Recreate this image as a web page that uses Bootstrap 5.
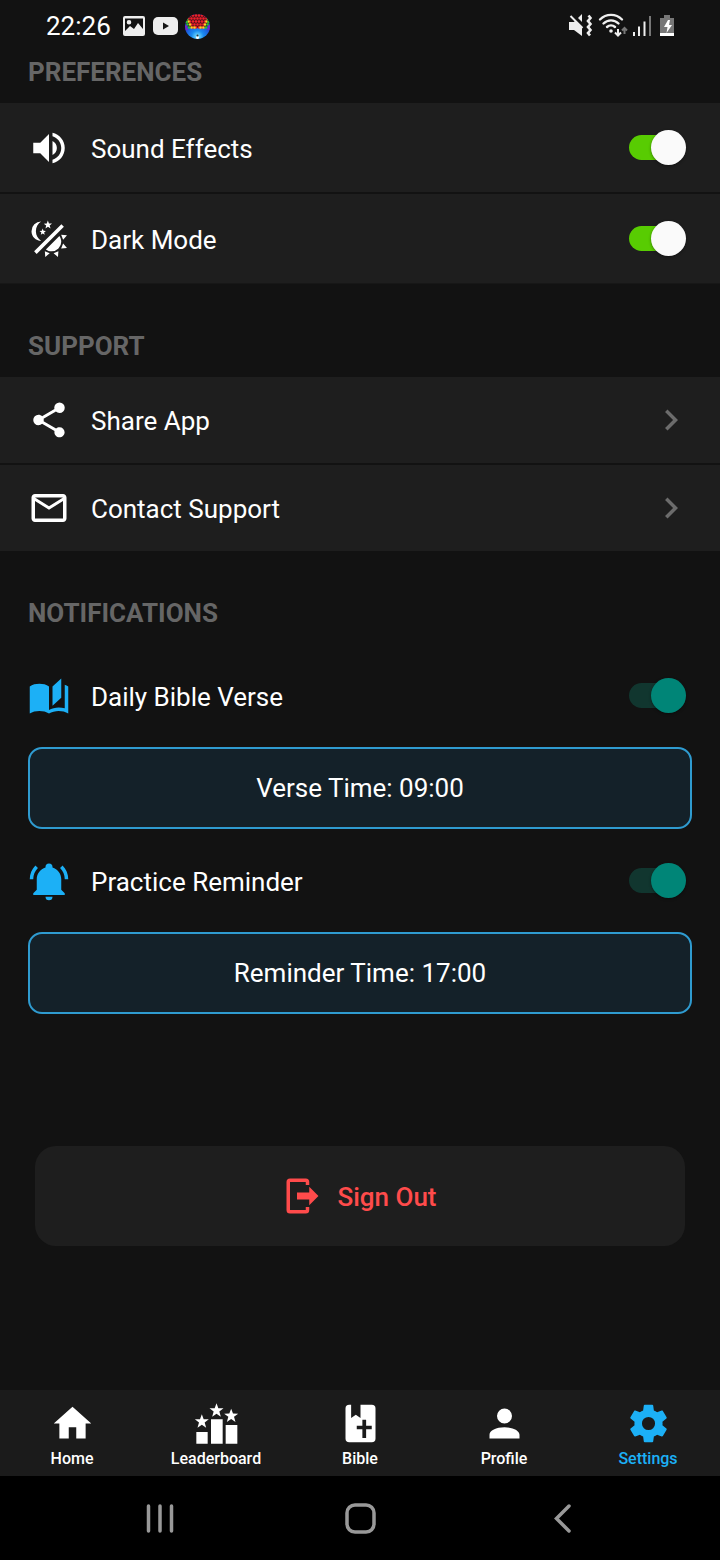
<!DOCTYPE html>
<html lang="en">
<head>
<meta charset="utf-8">
<meta name="viewport" content="width=device-width, initial-scale=1">
<title>Settings</title>
<link href="https://cdn.jsdelivr.net/npm/bootstrap@5.3.0/dist/css/bootstrap.min.css" rel="stylesheet">
<style>
body{background:#121212;color:#fff;font-family:Roboto,"Noto Sans",sans-serif;font-size:26px;line-height:40px}
svg{display:block;flex:none;fill:currentColor}
.status{height:52px;padding:0 45px 0 46px}
.status-left{gap:7px}
.section-title{font-size:26px;line-height:40px;font-weight:700;color:#666;margin:0 28px 11px}
.panel{margin-bottom:42px;border-radius:0}
.panel .list-group-item{padding:0 28px;border:0;height:86px;color:#fff;background:#1e1e1e}
.panel .list-group-item+.list-group-item{border-top:2px solid #121212;height:88px}
.toggles{border-bottom:1px solid #171717}
.panel.toggles .list-group-item{height:89px}
.panel.toggles .list-group-item+.list-group-item{height:91px}
.setting{gap:21px}
.setting label,.setting .grow{flex:1;padding-top:2px}
.ico{width:42px;height:42px}
.accent{color:#1cb0f6}
.chevron{color:#6c6c6c}
.switch{appearance:none;position:relative;width:57px;height:35px;margin:0 6px 0 0;flex:none;background:none;--track:#58cc02;--thumb:#fafafa}
.switch.teal{--track:#11362f;--thumb:#008577}
.switch::before{content:"";position:absolute;left:0;right:5px;top:5px;bottom:5px;border-radius:13px;background:var(--track)}
.switch::after{content:"";position:absolute;right:0;top:0;width:35px;height:35px;border-radius:50%;background:var(--thumb);box-shadow:0 1px 3px rgba(0,0,0,.4)}
.notify{height:83px;padding:0 28px;margin-top:10px}
.time-btn{margin:10px 28px 0;height:82px;border:2px solid #2f9bd0;border-radius:14px;background:#142129;color:#fff;font-size:26px;line-height:40px}
.time-btn:hover{background:#182a34;border-color:#1cb0f6;color:#fff}
.signout{margin:132px 35px 60px;height:100px;border:0;border-radius:21px;background:#1e1e1e;color:#ff4b4b;font-size:26px;line-height:40px;font-weight:500;gap:12px}
.signout:hover{background:#262626;color:#ff4b4b}
.signout span{padding-top:2px}
.tabs{height:86px;background:#1b1b1b}
.tabs .nav-link{color:#fff;padding:11px 0 0;font-size:16px;line-height:26px;font-weight:500}
.tabs .nav-link.active{color:#1cb0f6}
.tabs svg{width:45px;height:45px}
.sysnav{height:84px;background:#000;padding:0 60px}
.sysnav button{background:none;border:0;color:#999;padding:0}
.sysnav svg{fill:none;stroke:currentColor}
</style>
<script src="https://cdn.jsdelivr.net/npm/bootstrap@5.3.0/dist/js/bootstrap.bundle.min.js"></script>
</head>
<body class="d-flex flex-column min-vh-100">
<header class="status d-flex align-items-center justify-content-between">
  <div class="status-left d-flex align-items-center">
    <time class="me-1">22:26</time>
    <svg width="24" height="26" viewBox="1 0 24 26"><path fill="#eee" fill-rule="evenodd" d="M4 3h18a2 2 0 0 1 2 2v16a2 2 0 0 1-2 2H4a2 2 0 0 1-2-2V5a2 2 0 0 1 2-2zM4 5.500V18l5-5 4 3 4-6 5 6V5.500zM8 7a2.300 2.300 0 1 1 0 4.600A2.300 2.300 0 0 1 8 7z"/></svg>
    <svg width="25" height="26" viewBox="0 0 25 26"><rect x="0" y="4" width="25" height="18" rx="5" fill="#eee"/><path fill="#161616" d="M10 9.500v7l6-3.500z"/></svg>
    <svg width="25" height="25" viewBox="0 0 25 25">
      <defs>
        <radialGradient id="sky" cx=".5" cy=".9" r=".6"><stop offset="0" stop-color="#7fe8ff"/><stop offset=".4" stop-color="#1a8cf0"/><stop offset="1" stop-color="#1c3fd0"/></radialGradient>
        <clipPath id="ball"><circle cx="12.500" cy="12.500" r="12.500"/></clipPath>
      </defs>
      <g clip-path="url(#ball)">
        <path fill="url(#sky)" d="M0 0h25v25H0z"/>
        <path fill="#501018" d="M0 0h25v9l-4 5H4L0 9z"/>
        <g fill="none" stroke-width="2.600" stroke-linecap="round">
          <g stroke="#f0202c" stroke-dasharray="0 3"><path d="M5 1.500h16M3.500 4.500h18.500M5 7.500h16M6.500 10.500h12.500M8 13.500h9.500"/></g>
          <g stroke="#ffd21e" stroke-dasharray="0 3"><path d="M3.500 7.500h.1M21.500 7.500h.1M5 10.500h.1M20 10.500h.1M6.500 13.500h3.200M15.500 13.500h3.200"/></g>
          <g stroke="#25c33a"><path d="M2 5h.1M23 5h.1M1.500 8h.1M23.500 8h.1M2.500 10.500h.1M22.500 10.500h.1M4 13.500h.1M21 13.500h.1"/></g>
          <g stroke="#7a22c8"><path d="M.8 12.500h.1M24 12.500h.1M1.500 15h.1M23.500 15h.1"/></g>
        </g>
        <circle cx="12.500" cy="23.500" r="1.500" fill="#fff"/><circle cx="12.500" cy="21.500" r="1" fill="#333"/>
      </g>
    </svg>
  </div>
  <svg width="106" height="26" viewBox="0 0 106 26">
    <g fill="#eee"><path d="M0 9h5l1-1 7 7v8l-8-6H0zM9 5l4-4v8z"/><path d="M1.500 3l12 12" stroke="#eee" stroke-width="2"/></g>
    <path d="M19.500 2.500l2 2.500-2.500 3 2.500 3-2.500 3 2.500 3-2.500 3 2 2.500" fill="none" stroke="#eee" stroke-width="2.600"/>
    <g fill="none" stroke="#eee" stroke-width="2.400" stroke-linecap="round"><path d="M31 6.500a15.500 15.500 0 0 1 22 0M34.500 10.500a10.500 10.500 0 0 1 15 0M38 14a6 6 0 0 1 8 0"/></g><circle cx="42" cy="18" r="1.800" fill="#eee"/>
    <path d="M49 16v6M46 19.500l3 3 3-3" fill="none" stroke="#eee" stroke-width="2"/><path d="M55.500 21v-6M53 17.500l2.500-2.500 2.500 2.500" fill="none" stroke="#777" stroke-width="2"/>
    <path fill="#eee" d="M64 19h2v4h-2zM69 13.500h2V23h-2zM74.500 8.500h2V23h-2z"/><path fill="#777" d="M80 3h2v20h-2z"/>
    <path fill="#777" d="M95 2h6v3h4v15H91V5h4z"/><path fill="#fff" d="M91 20h14v3H91zM99 7h2l-1 5h3l-5.500 8 1-6H95z"/>
  </svg>
</header>

<main class="d-flex flex-column flex-grow-1">
  <h2 class="section-title">PREFERENCES</h2>
  <div class="panel toggles list-group list-group-flush">
    <div class="list-group-item d-flex align-items-center setting">
      <svg class="ico" viewBox="0 0 24 24"><path d="M14,3.230V5.290C16.890,6.150 19,8.830 19,12C19,15.170 16.890,17.840 14,18.700V20.770C18,19.860 21,16.280 21,12C21,7.720 18,4.140 14,3.230M16.500,12C16.500,10.230 15.500,8.710 14,7.970V16C15.500,15.290 16.500,13.760 16.500,12M3,9V15H7L12,20V4L7,9H3Z"/></svg>
      <label for="sound">Sound Effects</label>
      <input class="switch" type="checkbox" role="switch" id="sound" checked>
    </div>
    <div class="list-group-item d-flex align-items-center setting">
      <svg class="ico" viewBox="0 0 24 24"><path d="M7.500,2C5.710,3.150 4.500,5.180 4.500,7.500C4.500,9.820 5.710,11.850 7.530,13C4.460,13 2,10.540 2,7.500A5.500,5.500 0 0,1 7.500,2M19.070,3.500L20.500,4.930L4.930,20.500L3.500,19.070L19.070,3.500M12.890,5.930L11.410,5L9.970,6L10.390,4.300L9,3.240L10.750,3.120L11.330,1.470L12,3.100L13.730,3.130L12.380,4.260L12.890,5.930M9.590,9.540L8.430,8.810L7.310,9.590L7.650,8.270L6.560,7.440L7.920,7.350L8.370,6.060L8.880,7.330L10.240,7.360L9.190,8.230L9.590,9.540M19,13.500A5.500,5.500 0 0,1 13.500,19C12.280,19 11.150,18.600 10.240,17.930L17.930,10.240C18.600,11.150 19,12.280 19,13.500M14.600,20.080L17.370,18.930L17.130,22.280L14.600,20.080M18.930,17.380L20.080,14.610L22.280,17.150L18.930,17.380M20.080,12.420L18.940,9.640L22.280,9.880L20.080,12.420M9.630,18.930L12.400,20.080L9.870,22.270L9.630,18.930Z"/></svg>
      <label for="dark">Dark Mode</label>
      <input class="switch" type="checkbox" role="switch" id="dark" checked>
    </div>
  </div>

  <h2 class="section-title">SUPPORT</h2>
  <div class="panel list-group list-group-flush">
    <a href="#" class="list-group-item d-flex align-items-center setting">
      <svg class="ico" viewBox="0 0 24 24"><path d="M18,16.080C17.240,16.080 16.560,16.380 16.040,16.850L8.910,12.700C8.960,12.470 9,12.240 9,12C9,11.760 8.960,11.530 8.910,11.300L15.960,7.190C16.500,7.690 17.210,8 18,8A3,3 0 0,0 21,5A3,3 0 0,0 18,2A3,3 0 0,0 15,5C15,5.240 15.040,5.470 15.090,5.700L8.040,9.810C7.500,9.310 6.790,9 6,9A3,3 0 0,0 3,12A3,3 0 0,0 6,15C6.790,15 7.500,14.690 8.040,14.190L15.160,18.340C15.110,18.550 15.080,18.770 15.080,19C15.080,20.610 16.390,21.910 18,21.910C19.610,21.910 20.920,20.610 20.920,19A2.920,2.920 0 0,0 18,16.080Z"/></svg>
      <span class="grow">Share App</span>
      <svg class="ico chevron" viewBox="0 0 24 24"><path d="M8.590,16.580L13.170,12L8.590,7.410L10,6L16,12L10,18L8.590,16.580Z"/></svg>
    </a>
    <a href="#" class="list-group-item d-flex align-items-center setting">
      <svg class="ico" viewBox="0 0 24 24"><path d="M22 6C22 4.900 21.100 4 20 4H4C2.900 4 2 4.900 2 6V18C2 19.100 2.900 20 4 20H20C21.100 20 22 19.100 22 18V6M20 6L12 11L4 6H20M20 18H4V8L12 13L20 8V18Z"/></svg>
      <span class="grow">Contact Support</span>
      <svg class="ico chevron" viewBox="0 0 24 24"><path d="M8.590,16.580L13.170,12L8.590,7.410L10,6L16,12L10,18L8.590,16.580Z"/></svg>
    </a>
  </div>

  <h2 class="section-title">NOTIFICATIONS</h2>
  <div class="notify d-flex align-items-center setting">
    <svg class="ico accent" viewBox="0 0 24 24"><path d="M19 2L14 6.500V17.500L19 13V2M6.500 5C4.550 5 2.450 5.400 1 6.500V22C2.450 20.900 4.550 20.500 6.500 20.500C8.450 20.500 10.550 20.900 12 22C13.350 21.150 15.800 20.500 17.500 20.500C19.400 20.500 21.500 20.900 23 22V6.500C22.400 6.050 21.750 5.750 21 5.500V19C19.900 18.650 18.700 18.500 17.500 18.500C15.800 18.500 13.350 19.150 12 20V6.500C10.550 5.400 8.450 5 6.500 5Z"/></svg>
    <label for="verse">Daily Bible Verse</label>
    <input class="switch teal" type="checkbox" role="switch" id="verse" checked>
  </div>
  <button type="button" class="btn time-btn">Verse Time: 09:00</button>
  <div class="notify d-flex align-items-center setting">
    <svg class="ico accent" viewBox="0 0 24 24"><path d="M21,19V20H3V19L5,17V11C5,7.900 7.030,5.170 10,4.290C10,4.190 10,4.100 10,4A2,2 0 0,1 12,2A2,2 0 0,1 14,4C14,4.100 14,4.190 14,4.290C16.970,5.170 19,7.900 19,11V17L21,19M14,21A2,2 0 0,1 12,23A2,2 0 0,1 10,21M19.750,3.190L18.330,4.610C20.040,6.300 21,8.600 21,11H23C23,8.070 21.840,5.250 19.750,3.190M1,11H3C3,8.600 3.960,6.300 5.670,4.610L4.250,3.190C2.160,5.250 1,8.070 1,11Z"/></svg>
    <label for="practice">Practice Reminder</label>
    <input class="switch teal" type="checkbox" role="switch" id="practice" checked>
  </div>
  <button type="button" class="btn time-btn">Reminder Time: 17:00</button>

  <button type="button" class="btn signout d-flex align-items-center justify-content-center">
    <svg class="ico" viewBox="0 0 24 24"><path d="M15,17.250V14H8V10H15V6.750L20.250,12L15,17.250M13,2A2,2 0 0,1 15,4V5.750H13V4H4V20H13V18.250H15V20A2,2 0 0,1 13,22H4A2,2 0 0,1 2,20V4A2,2 0 0,1 4,2H13Z"/></svg>
    <span>Sign Out</span>
  </button>
</main>

<nav class="tabs nav nav-fill flex-nowrap" aria-label="Main">
  <a class="nav-link nav-item d-flex flex-column align-items-center w-100" href="#"><svg viewBox="0 0 24 24"><path d="M10,20V14H14V20H19V12H22L12,3L2,12H5V20H10Z"/></svg>Home</a>
  <a class="nav-link nav-item d-flex flex-column align-items-center w-100" href="#"><svg viewBox="0 0 135 135"><defs><path id="star" d="M0-22L5.500-7.500 21-7 8.500 2.500 13 18 0 9-13 18-8.500 2.500-21-7-5.500-7.500z"/></defs><path d="M7 93h34v35H7zM51 55h35v73H51zM95 72h35v56H95z"/><use href="#star" x="23.500" y="62"/><use href="#star" x="67.500" y="29"/><use href="#star" x="111.500" y="45"/></svg>Leaderboard</a>
  <a class="nav-link nav-item d-flex flex-column align-items-center w-100" href="#"><svg viewBox="0 0 24 24"><path fill-rule="evenodd" d="M6 2H7V9L9.500 7.300 12 9V2H18A2 2 0 0 1 20 4V20A2 2 0 0 1 18 22H6A2 2 0 0 1 4 20V4A2 2 0 0 1 6 2ZM13 10V13.200H10V15H13V19.700H15V15H18V13.200H15V10Z"/></svg>Bible</a>
  <a class="nav-link nav-item d-flex flex-column align-items-center w-100" href="#"><svg viewBox="0 0 24 24"><path d="M12,4A4,4 0 0,1 16,8A4,4 0 0,1 12,12A4,4 0 0,1 8,8A4,4 0 0,1 12,4M12,14C16.420,14 20,15.790 20,18V20H4V18C4,15.790 7.580,14 12,14Z"/></svg>Profile</a>
  <a class="nav-link nav-item active d-flex flex-column align-items-center w-100" href="#" aria-current="page"><svg viewBox="0 0 24 24"><path d="M12,15.500A3.500,3.500 0 0,1 8.500,12A3.500,3.500 0 0,1 12,8.500A3.500,3.500 0 0,1 15.500,12A3.500,3.500 0 0,1 12,15.500M19.430,12.970C19.470,12.650 19.500,12.330 19.500,12C19.500,11.670 19.470,11.340 19.430,11L21.540,9.370C21.730,9.220 21.780,8.950 21.660,8.730L19.660,5.270C19.540,5.050 19.270,4.960 19.050,5.050L16.560,6.050C16.040,5.660 15.500,5.320 14.870,5.070L14.500,2.420C14.460,2.180 14.250,2 14,2H10C9.750,2 9.540,2.180 9.500,2.420L9.130,5.070C8.500,5.320 7.960,5.660 7.440,6.050L4.950,5.050C4.730,4.960 4.460,5.050 4.340,5.270L2.340,8.730C2.210,8.950 2.270,9.220 2.460,9.370L4.570,11C4.530,11.340 4.500,11.670 4.500,12C4.500,12.330 4.530,12.650 4.570,12.970L2.460,14.630C2.270,14.780 2.210,15.050 2.340,15.270L4.340,18.730C4.460,18.950 4.730,19.030 4.950,18.950L7.440,17.940C7.960,18.340 8.500,18.680 9.130,18.930L9.500,21.580C9.540,21.820 9.750,22 10,22H14C14.250,22 14.460,21.820 14.500,21.580L14.870,18.930C15.500,18.670 16.040,18.340 16.560,17.940L19.050,18.950C19.270,19.030 19.540,18.950 19.660,18.730L21.660,15.270C21.780,15.050 21.730,14.780 21.540,14.630L19.430,12.970Z"/></svg>Settings</a>
</nav>
<div class="sysnav d-flex align-items-center">
  <button type="button" class="col-4 d-flex justify-content-center" aria-label="Recent apps"><svg width="32" height="32" viewBox="0 0 32 32" stroke-width="3.500" stroke-linecap="round"><path d="M4.500 4v25M16 4v25M27.500 4v25"/></svg></button>
  <button type="button" class="col-4 d-flex justify-content-center" aria-label="Home screen"><svg width="32" height="32" viewBox="0 0 32 32" stroke-width="3.500"><rect x="3" y="3" width="27" height="27" rx="8"/></svg></button>
  <button type="button" class="col-4 d-flex justify-content-center" aria-label="Back"><svg width="32" height="32" viewBox="0 0 32 32" stroke-width="3.500" stroke-linecap="round"><path d="M25 4L12.500 16.500 25 29"/></svg></button>
</div>
</body>
</html>
